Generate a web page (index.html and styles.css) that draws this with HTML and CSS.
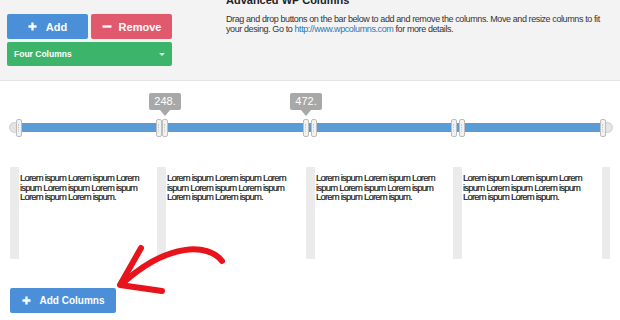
FILE: index.html
```html
<!DOCTYPE html>
<html lang="en">
<head>
    <meta charset="UTF-8">
    <title>Advanced WP Columns</title>
    <link rel="stylesheet" href="styles.css">
</head>
<body>

    <div class="top">
        <div class="controls">
            <div class="btn-row">
                <button class="btn btn-add">
                    <svg class="ico" viewBox="0 0 10 10"><path d="M5 0.5V9.5M0.5 5H9.5"/></svg>
                    Add
                </button>
                <button class="btn btn-remove">
                    <svg class="ico ico-wide" viewBox="0 0 11 10"><path d="M0.5 5H10.5"/></svg>
                    Remove
                </button>
            </div>
            <div class="select">
                Four Columns
                <span class="caret"></span>
            </div>
        </div>

        <div class="about">
            <h3>Advanced WP Columns</h3>
            <p>Drag and drop buttons on the bar below to add and remove the columns. Move and resize columns to fit your desing. Go to <a href="#">http://www.wpcolumns.com</a> for more details.</p>
        </div>
    </div>

    <div class="panel">
        <div class="slider">
            <div class="track">
                <span class="cap cap-left"></span>
                <span class="cap cap-right"></span>

                <span class="handle" style="left: -4px"></span>
                <span class="handle" style="left: 136px"></span>
                <span class="handle" style="left: 142px"></span>
                <span class="handle" style="left: 283px"></span>
                <span class="handle" style="left: 291px"></span>
                <span class="handle" style="left: 431px"></span>
                <span class="handle" style="left: 439px"></span>
                <span class="handle" style="left: 580px"></span>

                <span class="tip" style="left: 129px">248.</span>
                <span class="tip" style="left: 270px">472.</span>
            </div>
        </div>

        <div class="cols">
            <div class="col"><p>Lorem ispum Lorem ispum Lorem ispum Lorem ispum Lorem ispum Lorem ispum Lorem ispum.</p></div>
            <div class="col"><p>Lorem ispum Lorem ispum Lorem ispum Lorem ispum Lorem ispum Lorem ispum Lorem ispum.</p></div>
            <div class="col"><p>Lorem ispum Lorem ispum Lorem ispum Lorem ispum Lorem ispum Lorem ispum Lorem ispum.</p></div>
            <div class="col"><p>Lorem ispum Lorem ispum Lorem ispum Lorem ispum Lorem ispum Lorem ispum Lorem ispum.</p></div>
        </div>

        <button class="btn btn-add btn-cols">
            <svg class="ico" viewBox="0 0 10 10"><path d="M5 0.5V9.5M0.5 5H9.5"/></svg>
            Add Columns
        </button>

        <svg class="arrow" viewBox="110 236 120 64">
            <path d="M222 261C208 243 168 243 124 282"/>
            <path d="M141 248L120 285L162 291"/>
        </svg>
    </div>

</body>
</html>
```

FILE: styles.css
```css
body {
    font-family: "Liberation Sans", Arial, sans-serif;
    background: #f3f3f3;
    color: #333;
    margin: 0;
    padding: 0;
    overflow: hidden;
}

.top {
    display: flex;
    height: 80px;
    padding-left: 7px;
    border-bottom: 1px solid #e6e6e6;
}

.controls {
    width: 165px;
    padding-top: 14px;
}

.btn-row {
    display: flex;
    gap: 3px;
    margin-bottom: 3px;
}

.btn {
    display: flex;
    align-items: center;
    justify-content: center;
    gap: 9px;
    height: 25px;
    border: none;
    border-radius: 2px;
    color: white;
    font-family: "Liberation Sans", Arial, sans-serif;
    font-weight: bold;
    font-size: 11px;
    padding: 0;
    cursor: pointer;
}

.btn-row .btn {
    width: 81px;
}

.btn-add {
    background: #4a8fd8;
}

.btn-remove {
    background: #e0596c;
    gap: 7px;
}

.ico {
    width: 9px;
    height: 9px;
    stroke: white;
    stroke-width: 2.6;
    fill: none;
}

.ico-wide {
    width: 10px;
}

.select {
    display: flex;
    align-items: center;
    justify-content: space-between;
    height: 24px;
    padding: 0 7px;
    background: #3cb46a;
    border-radius: 2px;
    color: white;
    font-size: 8.5px;
    font-weight: bold;
}

.caret {
    width: 0;
    height: 0;
    border-left: 3px solid transparent;
    border-right: 3px solid transparent;
    border-top: 3px solid #e8f6ed;
}

.about {
    margin-left: 54px;
    width: 378px;
}

.about h3 {
    margin: -6px 0 0;
    font-size: 11px;
    line-height: 12px;
    color: #222;
}

.about p {
    margin: 8px 0 0;
    font-size: 9px;
    line-height: 10px;
    letter-spacing: -0.4px;
    color: #333;
}

.about a {
    color: #2a79b3;
    text-decoration: none;
}

.panel {
    position: relative;
    background: white;
    height: 239px;
}

.slider {
    padding: 42px 0 0 20px;
}

.track {
    position: relative;
    width: 580px;
    height: 9px;
    background: #5b9bd6;
}

.cap {
    position: absolute;
    top: -1px;
    width: 11px;
    height: 11px;
    border-radius: 50%;
    background: #e4e4e4;
    border: 1px solid #cfcfcf;
    box-sizing: border-box;
}

.cap-left {
    left: -11px;
}

.cap-right {
    left: 582px;
}

.handle {
    position: absolute;
    top: -4px;
    width: 6px;
    height: 18px;
    background: #f1f1f1;
    border: 1px solid #bdbdbd;
    border-radius: 2px;
    box-sizing: border-box;
}

.handle::after {
    content: "";
    position: absolute;
    left: 1px;
    top: 4px;
    width: 1px;
    height: 8px;
    border-left: 1px dotted #c8c8c8;
}

.tip {
    position: absolute;
    top: -30px;
    width: 32px;
    height: 17px;
    line-height: 17px;
    text-align: center;
    background: #a8a8a8;
    color: white;
    font-size: 11px;
    border-radius: 2px;
}

.tip::after {
    content: "";
    position: absolute;
    left: 11px;
    top: 17px;
    border-left: 5px solid transparent;
    border-right: 5px solid transparent;
    border-top: 6px solid #a8a8a8;
}

.cols {
    display: grid;
    grid-template-columns: 147px 149px 147px 157px;
    height: 92px;
    margin: 35px 0 0 10px;
}

.col {
    border-left: 9px solid #ebebeb;
    padding: 6px 0 0 1px;
}

.col:last-child {
    border-right: 8px solid #ebebeb;
}

.col p {
    margin: 0;
    font-size: 9.5px;
    line-height: 9.5px;
    letter-spacing: -0.8px;
    color: #1a1a1a;
    -webkit-text-stroke: 0.2px #1a1a1a;
}

.btn-cols {
    margin: 29px 0 0 10px;
    width: 106px;
    font-size: 10px;
}

.arrow {
    position: absolute;
    left: 110px;
    top: 155px;
    width: 120px;
    height: 64px;
    fill: none;
    stroke: #e8141b;
    stroke-width: 6;
    stroke-linecap: round;
    stroke-linejoin: round;
}
```
